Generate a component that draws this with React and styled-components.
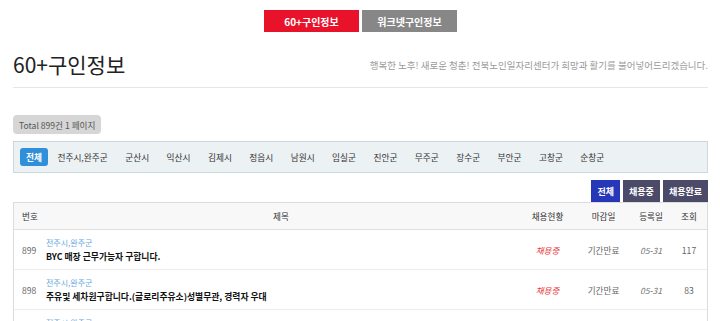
import React from 'react';
import styled, { createGlobalStyle } from 'styled-components';

const GlobalStyle = createGlobalStyle`
    body {
        margin: 0;
        background: #fff;
        font-family: "Noto Sans CJK KR", "Noto Sans", sans-serif;
        color: #333;
    }
`;

const REGIONS = ['전체', '전주시,완주군', '군산시', '익산시', '김제시', '정읍시', '남원시', '임실군', '진안군', '무주군', '장수군', '부안군', '고창군', '순창군'];

const JOBS = [
    { no: 899, region: '전주시,완주군', title: 'BYC 매장 근무가능자 구합니다.', status: '채용중', deadline: '기간만료', date: '05-31', views: 117 },
    { no: 898, region: '전주시,완주군', title: '주유및 세차원구합니다.(글로리주유소)성별무관, 경력자 우대', status: '채용중', deadline: '기간만료', date: '05-31', views: 83 },
    { no: 897, region: '전주시,완주군', title: '아파트 경비원 구합니다.', status: '채용중', deadline: '기간만료', date: '05-31', views: 95 },
];

const Page = styled('div')`
    padding: 0 12px 0 13px;
`;

const TopNav = styled('nav')`
    display: flex;
    justify-content: center;
    gap: 3px;
    padding-top: 10px;
`;

const NavButton = styled('a')`
    display: flex;
    align-items: center;
    justify-content: center;
    width: 95px;
    height: 22px;
    background: ${props => props.active ? '#e8132b' : '#878787'};
    color: #fff;
    font-size: 10px;
    font-weight: bold;
`;

const Header = styled('div')`
    display: flex;
    align-items: center;
    justify-content: space-between;
    height: 55px;
    border-bottom: 1px solid #e6e6e6;
`;

const Title = styled('h1')`
    margin: 0;
    font-size: 21px;
    font-weight: normal;
    color: #222;
    padding-top: 8px;
`;

const Subtitle = styled('p')`
    margin: 0;
    font-size: 9.5px;
    color: #9a9a9a;
    padding-top: 11px;
`;

const TotalBadge = styled('span')`
    display: inline-flex;
    align-items: center;
    height: 19px;
    margin-top: 27px;
    padding: 0 6px;
    border-radius: 4px;
    background: #d6d6d6;
    color: #555;
    font-size: 8.6px;
`;

const FilterBar = styled('div')`
    display: flex;
    align-items: center;
    gap: 1.4px;
    height: 30px;
    margin-top: 7px;
    padding: 0 6px;
    border: 1px solid #c9d9de;
    background: #ecf1f4;
`;

const FilterItem = styled('a')`
    display: flex;
    align-items: center;
    height: 18px;
    padding: 0 ${props => props.active ? '6px' : '8px'};
    border-radius: 3px;
    background: ${props => props.active ? '#2f8fd8' : 'transparent'};
    color: ${props => props.active ? '#fff' : '#333'};
    font-size: 8.7px;
    font-weight: ${props => props.active ? 'bold' : 'normal'};
`;

const StatusTabs = styled('div')`
    display: flex;
    justify-content: flex-end;
    gap: 3px;
    margin-top: 7px;
`;

const StatusButton = styled('a')`
    display: flex;
    align-items: center;
    justify-content: center;
    height: 22px;
    padding: 0 6px;
    background: ${props => props.active ? '#2637b8' : '#4b4a68'};
    color: #fff;
    font-size: 9px;
    font-weight: bold;
`;

const Table = styled('div')`
    border: 1px solid #dcdcdc;
    border-bottom: none;
`;

const Row = styled('div')`
    display: grid;
    grid-template-columns: 29px 1fr 57px 55px 40px 36px;
    align-items: center;
    height: ${props => props.head ? '26px' : '39px'};
    border-bottom: 1px solid ${props => props.head ? '#dedede' : '#ececec'};
    background: ${props => props.head ? '#f8f8f8' : '#fff'};
    font-size: 8.6px;
`;

const Cell = styled('div')`
    text-align: ${props => props.align || 'center'};
    padding-left: ${props => props.align === 'left' ? '8px' : '0'};
    color: ${props => props.color || '#333'};
    font-style: ${props => props.italic ? 'italic' : 'normal'};
`;

const TitleCell = styled('div')`
    display: flex;
    flex-direction: column;
    padding-left: 3px;
`;

const RegionLink = styled('span')`
    color: #6aa8e0;
    font-size: 8px;
    line-height: 14px;
`;

const JobTitle = styled('span')`
    color: #111;
    font-size: 8.8px;
    font-weight: bold;
    line-height: 14px;
`;

export default function App() {
    return (
        <Page>
            <GlobalStyle />
            <TopNav>
                <NavButton active>60+구인정보</NavButton>
                <NavButton>워크넷구인정보</NavButton>
            </TopNav>
            <Header>
                <Title>60+구인정보</Title>
                <Subtitle>행복한 노후! 새로운 청춘! 전북노인일자리센터가 희망과 활기를 불어넣어드리겠습니다.</Subtitle>
            </Header>
            <TotalBadge>Total 899건 1 페이지</TotalBadge>
            <FilterBar>
                {REGIONS.map((region, index) => (
                    <FilterItem key={region} active={index === 0}>{region}</FilterItem>
                ))}
            </FilterBar>
            <StatusTabs>
                <StatusButton active>전체</StatusButton>
                <StatusButton>채용중</StatusButton>
                <StatusButton>채용완료</StatusButton>
            </StatusTabs>
            <Table>
                <Row head>
                    <Cell align="left">번호</Cell>
                    <Cell>제목</Cell>
                    <Cell>채용현황</Cell>
                    <Cell>마감일</Cell>
                    <Cell>등록일</Cell>
                    <Cell>조회</Cell>
                </Row>
                {JOBS.map(job => (
                    <Row key={job.no}>
                        <Cell align="left" color="#666">{job.no}</Cell>
                        <TitleCell>
                            <RegionLink>{job.region}</RegionLink>
                            <JobTitle>{job.title}</JobTitle>
                        </TitleCell>
                        <Cell color="#e8383d" italic>{job.status}</Cell>
                        <Cell color="#666">{job.deadline}</Cell>
                        <Cell color="#777" italic>{job.date}</Cell>
                        <Cell color="#666">{job.views}</Cell>
                    </Row>
                ))}
            </Table>
        </Page>
    );
}
